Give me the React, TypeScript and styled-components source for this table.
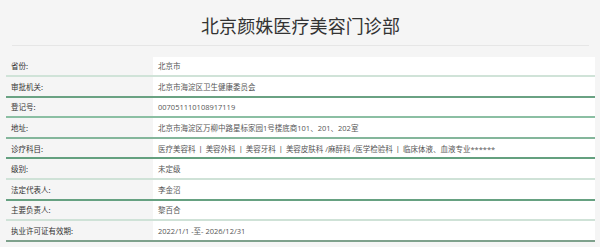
import React from "react";
import styled, { createGlobalStyle } from "styled-components";

const Global = createGlobalStyle`
  html, body { margin: 0; padding: 0; background: #f5f5f5; }
  body { font-family: "Open Sans", "Noto Sans CJK SC", sans-serif; color: #333; }
`;

const Page = styled.div`
  width: 600px;
  height: 247px;
  background: #f5f5f5;
  padding: 0 5px 0 6px;
  box-sizing: border-box;
  overflow: hidden;
`;

const Header = styled.div`
  margin: 0 6px;
  height: 46px;
  border-bottom: 1px solid #e6e6e6;
  display: flex;
  align-items: center;
  justify-content: center;
  box-sizing: border-box;
  padding-top: 4px;
`;

const Title = styled.h1`
  margin: 0;
  font-family: "Noto Sans CJK SC", sans-serif;
  font-weight: 400;
  font-size: 18px;
  color: #333;
  letter-spacing: 0.1px;
`;

const Table = styled.div`
  margin-top: 10.5px;
  display: flex;
  flex-direction: column;
`;

const Row = styled.div<{ $line: string }>`
  display: grid;
  grid-template-columns: 147px 1fr;
  height: 20.6px;
  box-sizing: border-box;
  border-bottom: 2px solid ${(p) => p.$line};
`;

const Label = styled.div`
  display: flex;
  align-items: center;
  padding-left: 5px;
  font-family: "Noto Sans CJK SC", sans-serif;
  font-size: 7.5px;
  color: #333;
`;

const Value = styled.div`
  display: flex;
  align-items: center;
  padding-left: 5px;
  background: #fff;
  font-family: "Open Sans", "Noto Sans CJK SC", sans-serif;
  font-size: 7.5px;
  color: #555;
  white-space: pre;
  overflow: hidden;
`;

const Sep = styled.span`
  color: #333;
  padding: 0 3px;
`;

const rows: { label: string; value: string; line: string }[] = [
  { label: "省份:", value: "北京市", line: "#d0e3d8" },
  { label: "审批机关:", value: "北京市海淀区卫生健康委员会", line: "#6aa283" },
  { label: "登记号:", value: "007051110108917119", line: "#8bbfa3" },
  { label: "地址:", value: "北京市海淀区万柳中路星标家园1号楼底商101、201、202室", line: "#84b69b" },
  {
    label: "诊疗科目:",
    value: "医疗美容科|美容外科|美容牙科|美容皮肤科 /麻醉科 /医学检验科|临床体液、血液专业******",
    line: "#64a07f",
  },
  { label: "级别:", value: "未定级", line: "#cfe2d7" },
  { label: "法定代表人:", value: "李金沼", line: "#66a181" },
  { label: "主要负责人:", value: "黎百合", line: "#cfe2d7" },
  { label: "执业许可证有效期:", value: "2022/1/1 -至- 2026/12/31", line: "#7ea18c" },
];

const renderValue = (v: string) => {
  const parts = v.split("|");
  return parts.map((p, i) => (
    <React.Fragment key={i}>
      {i > 0 && <Sep>|</Sep>}
      {p}
    </React.Fragment>
  ));
};

export default function App() {
  return (
    <Page>
      <Global />
      <Header>
        <Title>北京颜姝医疗美容门诊部</Title>
      </Header>
      <Table>
        {rows.map((r) => (
          <Row key={r.label} $line={r.line}>
            <Label>{r.label}</Label>
            <Value>{renderValue(r.value)}</Value>
          </Row>
        ))}
      </Table>
    </Page>
  );
}
